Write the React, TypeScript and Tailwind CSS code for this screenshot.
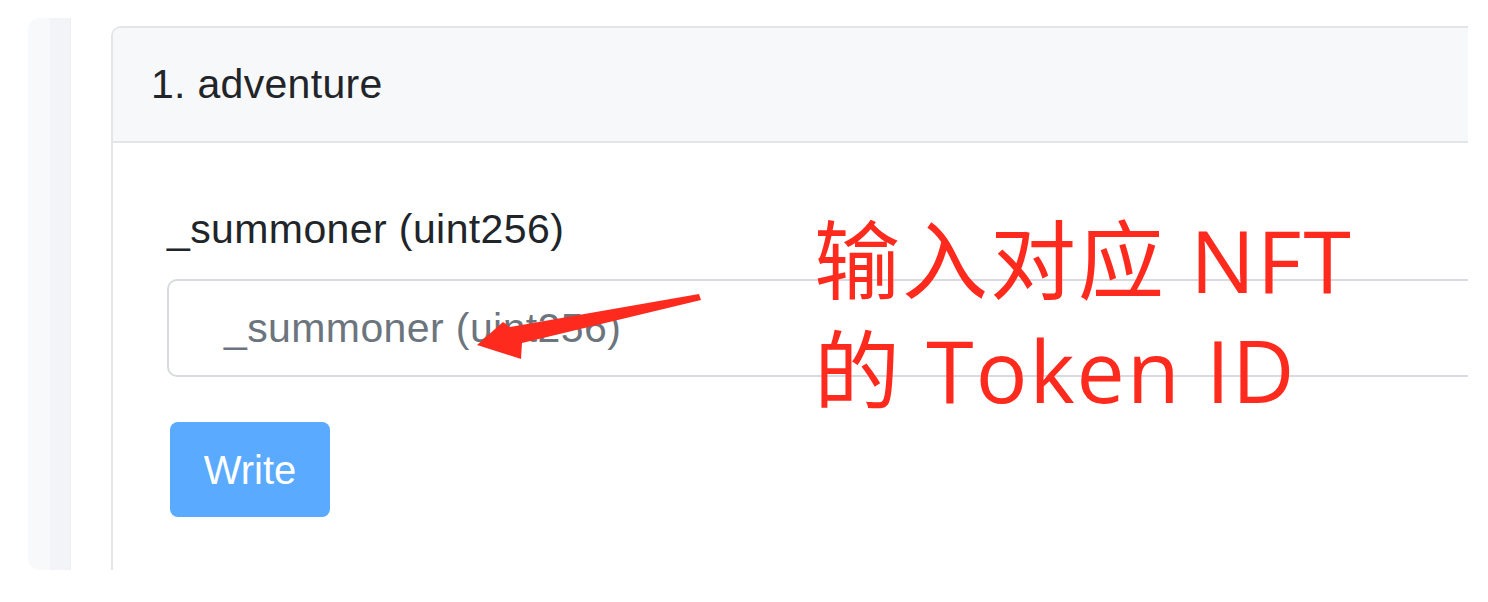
import React from "react";

export default function App() {
  return (
    <div
      className="relative w-[1488px] h-[602px] bg-white overflow-hidden"
      style={{ fontFamily: '"Liberation Sans", Arial, sans-serif' }}
    >
      <div className="pt-[18px] pl-[28px]">
        <div className="flex w-[1440px] h-[552px] overflow-hidden">
          {/* left panel */}
          <div className="flex w-[43px] shrink-0 rounded-l-[12px] overflow-hidden">
            <div className="w-[22px] bg-[#f8f9fb]" />
            <div className="w-[20px] bg-[#f3f4f7]" />
            <div className="w-[1px] bg-[#eceef2]" />
          </div>
          <div className="w-[40px] shrink-0" />
          {/* card */}
          <div className="mt-[8px] flex-1 min-w-0">
            <div className="w-[1400px] h-[600px] border-l-2 border-t-2 border-[#e4e5e7] rounded-tl-[10px] overflow-hidden">
              <div className="h-[115px] bg-[#f7f8f9] border-b-2 border-[#e4e5e7] flex items-center pl-[38px]">
                <span className="text-[41px] tracking-[0.3px] leading-none text-[#212529]">1. adventure</span>
              </div>
              <div className="pl-[54px] pt-[56px]">
                <div className="text-[41px] tracking-[0.4px] leading-[60px] text-[#212529]">_summoner (uint256)</div>
                <div className="mt-[20px] h-[98px] border-2 border-r-0 border-[#d7dbe0] rounded-l-[10px] flex items-center pl-[55px]">
                  <span className="text-[41px] tracking-[0.4px] leading-none text-[#6c757d]">_summoner (uint256)</span>
                </div>
                <button className="mt-[45px] ml-[3px] w-[160px] h-[95px] rounded-[8px] bg-[#5aaaff] text-white text-[40px] flex items-center justify-center">
                  Write
                </button>
              </div>
            </div>
          </div>
        </div>
      </div>

      {/* red annotation */}
      <div
        className="absolute left-[814px] top-[205px] text-[86px] leading-[110px] tracking-[2px] text-[#fe2a1e] whitespace-nowrap"
        style={{ fontFamily: '"Open Sans", "Noto Sans CJK SC", sans-serif' }}
      >
        <div>输入对应 NFT</div>
        <div>的 Token ID</div>
      </div>

      {/* arrow */}
      <svg className="absolute left-0 top-0" width="1488" height="602" viewBox="0 0 1488 602">
        <polygon
          points="477,345 503,322 510,327 699,294 701,300 522,343 521,359"
          fill="#fe2a1e"
        />
      </svg>
    </div>
  );
}
